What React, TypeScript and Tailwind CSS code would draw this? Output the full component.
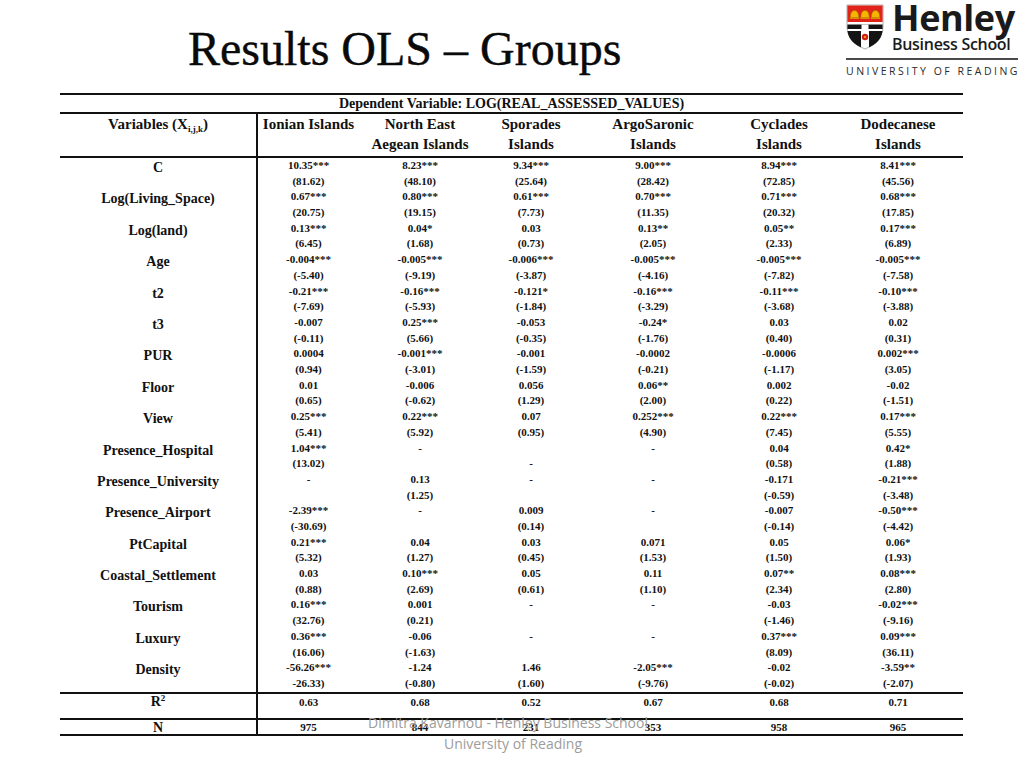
import React from "react";

type Cell = [string, string];

const COLS = ["w-[101px]", "w-[122px]", "w-[100px]", "w-[144px]", "w-[108px]", "w-[130px]"];

const HEAD: [string, string][] = [
  ["Ionian Islands", ""],
  ["North East", "Aegean Islands"],
  ["Sporades", "Islands"],
  ["ArgoSaronic", "Islands"],
  ["Cyclades", "Islands"],
  ["Dodecanese", "Islands"],
];

const ROWS: { label: string; vals: Cell[] }[] = [
  { label: "C", vals: [["10.35***", "(81.62)"], ["8.23***", "(48.10)"], ["9.34***", "(25.64)"], ["9.00***", "(28.42)"], ["8.94***", "(72.85)"], ["8.41***", "(45.56)"]] },
  { label: "Log(Living_Space)", vals: [["0.67***", "(20.75)"], ["0.80***", "(19.15)"], ["0.61***", "(7.73)"], ["0.70***", "(11.35)"], ["0.71***", "(20.32)"], ["0.68***", "(17.85)"]] },
  { label: "Log(land)", vals: [["0.13***", "(6.45)"], ["0.04*", "(1.68)"], ["0.03", "(0.73)"], ["0.13**", "(2.05)"], ["0.05**", "(2.33)"], ["0.17***", "(6.89)"]] },
  { label: "Age", vals: [["-0.004***", "(-5.40)"], ["-0.005***", "(-9.19)"], ["-0.006***", "(-3.87)"], ["-0.005***", "(-4.16)"], ["-0.005***", "(-7.82)"], ["-0.005***", "(-7.58)"]] },
  { label: "t2", vals: [["-0.21***", "(-7.69)"], ["-0.16***", "(-5.93)"], ["-0.121*", "(-1.84)"], ["-0.16***", "(-3.29)"], ["-0.11***", "(-3.68)"], ["-0.10***", "(-3.88)"]] },
  { label: "t3", vals: [["-0.007", "(-0.11)"], ["0.25***", "(5.66)"], ["-0.053", "(-0.35)"], ["-0.24*", "(-1.76)"], ["0.03", "(0.40)"], ["0.02", "(0.31)"]] },
  { label: "PUR", vals: [["0.0004", "(0.94)"], ["-0.001***", "(-3.01)"], ["-0.001", "(-1.59)"], ["-0.0002", "(-0.21)"], ["-0.0006", "(-1.17)"], ["0.002***", "(3.05)"]] },
  { label: "Floor", vals: [["0.01", "(0.65)"], ["-0.006", "(-0.62)"], ["0.056", "(1.29)"], ["0.06**", "(2.00)"], ["0.002", "(0.22)"], ["-0.02", "(-1.51)"]] },
  { label: "View", vals: [["0.25***", "(5.41)"], ["0.22***", "(5.92)"], ["0.07", "(0.95)"], ["0.252***", "(4.90)"], ["0.22***", "(7.45)"], ["0.17***", "(5.55)"]] },
  { label: "Presence_Hospital", vals: [["1.04***", "(13.02)"], ["-", ""], ["", "-"], ["-", ""], ["0.04", "(0.58)"], ["0.42*", "(1.88)"]] },
  { label: "Presence_University", vals: [["-", ""], ["0.13", "(1.25)"], ["-", ""], ["-", ""], ["-0.171", "(-0.59)"], ["-0.21***", "(-3.48)"]] },
  { label: "Presence_Airport", vals: [["-2.39***", "(-30.69)"], ["-", ""], ["0.009", "(0.14)"], ["-", ""], ["-0.007", "(-0.14)"], ["-0.50***", "(-4.42)"]] },
  { label: "PtCapital", vals: [["0.21***", "(5.32)"], ["0.04", "(1.27)"], ["0.03", "(0.45)"], ["0.071", "(1.53)"], ["0.05", "(1.50)"], ["0.06*", "(1.93)"]] },
  { label: "Coastal_Settlement", vals: [["0.03", "(0.88)"], ["0.10***", "(2.69)"], ["0.05", "(0.61)"], ["0.11", "(1.10)"], ["0.07**", "(2.34)"], ["0.08***", "(2.80)"]] },
  { label: "Tourism", vals: [["0.16***", "(32.76)"], ["0.001", "(0.21)"], ["-", ""], ["-", ""], ["-0.03", "(-1.46)"], ["-0.02***", "(-9.16)"]] },
  { label: "Luxury", vals: [["0.36***", "(16.06)"], ["-0.06", "(-1.63)"], ["-", ""], ["-", ""], ["0.37***", "(8.09)"], ["0.09***", "(36.11)"]] },
  { label: "Density", vals: [["-56.26***", "-26.33)"], ["-1.24", "(-0.80)"], ["1.46", "(1.60)"], ["-2.05***", "(-9.76)"], ["-0.02", "(-0.02)"], ["-3.59**", "(-2.07)"]] },
];

const R2 = ["0.63", "0.68", "0.52", "0.67", "0.68", "0.71"];
const N = ["975", "844", "231", "353", "958", "965"];

function Shield() {
  return (
    <svg viewBox="0 0 38 46" className="w-[38px] h-[46px] mt-[4px] shrink-0">
      <path d="M1 1 H37 V22 C37 35 28 41 19 45 C10 41 1 35 1 22 Z" fill="#fff" stroke="#9a9a9a" strokeWidth="0.8" />
      <path d="M1.4 1.4 H36.6 V18 H1.4 Z" fill="#e2231a" />
      {[8.5, 19, 29.5].map((cx) => (
        <g key={cx}>
          <path d={`M${cx - 4.2} 13.5 C${cx - 4.2} 8 ${cx - 2} 6.5 ${cx} 6.5 C${cx + 2} 6.5 ${cx + 4.2} 8 ${cx + 4.2} 13.5 Z`} fill="#f4b400" stroke="#9c6a00" strokeWidth="0.6" />
          <rect x={cx - 4.6} y="13.3" width="9.2" height="1.6" fill="#d99a00" />
        </g>
      ))}
      <rect x="1.4" y="20.5" width="35.2" height="4.5" fill="#141414" />
      <rect x="15.5" y="20.5" width="7" height="4.5" fill="#fff" />
      <path d="M1.6 27 H15 V43.5 C9 40.5 3 36 1.6 28 Z" fill="#141414" />
      <path d="M36.4 27 H23 V43.5 C29 40.5 35 36 36.4 28 Z" fill="#141414" />
      <circle cx="19" cy="33" r="3.2" fill="#d0201a" />
      <circle cx="19" cy="33" r="1.1" fill="#f4b400" />
    </svg>
  );
}

export default function App() {
  const serif = "font-['Liberation_Serif','Times_New_Roman',serif]";
  return (
    <div className="relative w-[1024px] h-[768px] bg-white overflow-hidden text-black">
      {/* header */}
      <div className="flex justify-between items-start h-[93px]">
        <div className={`pl-[188px] pt-[25px] text-[48px] leading-[48px] ${serif} text-[#0a0a0a] [-webkit-text-stroke:0.4px_#0a0a0a]`}>
          Results OLS – Groups
        </div>
        <div className="flex flex-col w-[172px] mr-[6px] font-['Open_Sans',sans-serif]">
          <div className="flex items-start gap-[8px] h-[56px]">
            <Shield />
            <div className="flex flex-col text-[#1a1a1a] whitespace-nowrap">
              <span className="text-[36px] font-bold leading-[36px] tracking-[-0.4px]">Henley</span>
              <span className="text-[16px] font-semibold leading-[18px] -mt-[1px] tracking-[-0.3px]">Business School</span>
            </div>
          </div>
          <div className="h-[1.5px] bg-[#4a4a4a] mt-[2px]" />
          <div className="text-[10.5px] leading-[12px] tracking-[2.5px] mt-[5px] text-[#2a2a2a] whitespace-nowrap">
            UNIVERSITY OF READING
          </div>
        </div>
      </div>

      {/* table */}
      <div className={`ml-[60px] w-[903px] border-t-2 border-[#111] font-bold ${serif} text-[#111]`}>
        <div className="h-[19px] border-b-2 border-[#111] flex items-center justify-center text-[14px] leading-[16px]">
          Dependent Variable: LOG(REAL_ASSESSED_VALUES)
        </div>
        <div className="flex h-[44px] border-b-2 border-[#111] text-[15px] leading-[20px]">
          <div className="w-[198px] border-r-2 border-[#111] text-center">
            Variables (X<sub className="text-[9px] align-baseline relative top-[3px]">i,j,k</sub>)
          </div>
          {HEAD.map((h, i) => (
            <div key={i} className={`${COLS[i]} flex flex-col items-center`}>
              <span>{h[0]}</span>
              <span>{h[1]}</span>
            </div>
          ))}
        </div>
        {ROWS.map((r) => (
          <div key={r.label} className="flex h-[31.4px]">
            <div className="w-[198px] border-r-2 border-[#111] text-center text-[14px] leading-[16px] pt-[2px]">
              {r.label}
            </div>
            {r.vals.map((v, i) => (
              <div key={i} className={`${COLS[i]} flex flex-col items-center text-[11px] leading-[15.7px]`}>
                <span className="h-[15.7px]">{v[0]}</span>
                <span className="h-[15.7px]">{v[1]}</span>
              </div>
            ))}
          </div>
        ))}
        <div className="flex h-[26px] border-t-2 border-[#111]">
          <div className="w-[198px] border-r-2 border-[#111] text-center text-[14px] leading-[16px]">
            R<sup className="text-[9px] relative -top-[5px]">2</sup>
          </div>
          {R2.map((v, i) => (
            <div key={i} className={`${COLS[i]} text-center text-[11px] leading-[16px]`}>{v}</div>
          ))}
        </div>
        <div className="flex h-[18px] border-y-2 border-[#111]">
          <div className="w-[198px] border-r-2 border-[#111] text-center text-[14px] leading-[15px]">N</div>
          {N.map((v, i) => (
            <div key={i} className={`${COLS[i]} text-center text-[11px] leading-[15px]`}>{v}</div>
          ))}
        </div>
      </div>

      {/* footer */}
      <div className="absolute left-0 right-0 top-[712px] pointer-events-none text-center font-['Open_Sans',sans-serif] text-[14px] leading-[21px] text-[#9c9c9c] pr-[8px]">
        <div>Dimitra Kavarnou - Henley Business School</div>
        <div className="pl-[10px]">University of Reading</div>
      </div>
    </div>
  );
}
